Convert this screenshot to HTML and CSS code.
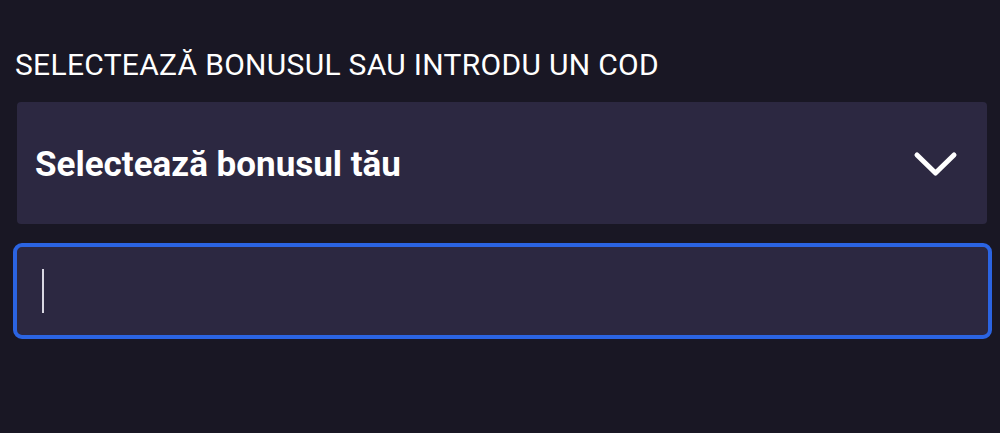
FILE: index.html
```html
<!DOCTYPE html>
<html>
<head>
  <title>Bonus</title>
  <link rel="stylesheet" href="styles.css">
</head>
<body>

  <div class="bonus">
    <div class="bonus-label">SELECTEAZĂ BONUSUL SAU INTRODU UN COD</div>

    <div class="bonus-select">
      <span>Selectează bonusul tău</span>
      <svg class="chevron" width="45" height="27" viewBox="0 0 45 27">
        <polyline points="4,4 22.5,22 41,4" fill="none" stroke="#fff" stroke-width="5" stroke-linecap="round" stroke-linejoin="round"/>
      </svg>
    </div>

    <div class="bonus-code">
      <span class="caret"></span>
    </div>
  </div>

</body>
</html>
```

FILE: styles.css
```css
body {
  margin: 0;
  background-color: #191724;
  font-family: Roboto, "Liberation Sans", sans-serif;
  color: #fff;
}
.bonus {
  display: flex;
  flex-direction: column;
  padding: 49px 8px 0 13px;
}
.bonus-label {
  font-size: 30px;
  line-height: 32px;
  letter-spacing: 0.3px;
  margin-left: 2px;
  margin-bottom: 21px;
}
.bonus-select {
  display: flex;
  align-items: center;
  justify-content: space-between;
  height: 120px;
  margin: 0 5px 19px 4px;
  padding: 2px 29px 0 18px;
  background-color: #2c2841;
  border-radius: 4px;
  font-size: 35px;
  font-weight: bold;
}
.chevron {
  display: block;
}
.bonus-code {
  display: flex;
  align-items: center;
  height: 88px;
  padding-left: 25px;
  background-color: #2c2841;
  border: 4px solid #2b64e2;
  border-radius: 9px;
}
.caret {
  width: 2px;
  height: 44px;
  background-color: #d9d7e2;
}
```
